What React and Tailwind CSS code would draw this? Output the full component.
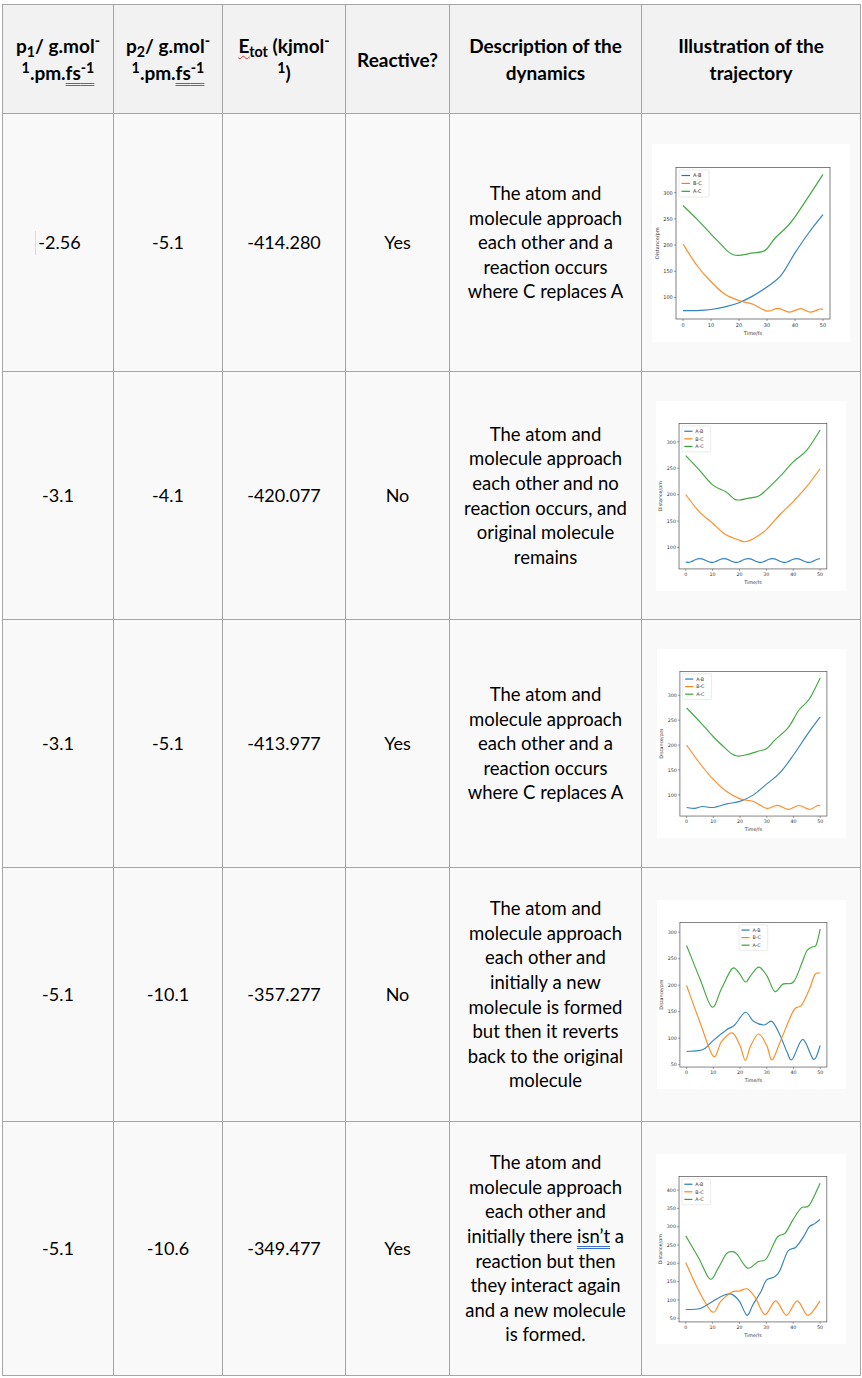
import React from 'react';

const COLORS = ['#1f77b4', '#ff7f0e', '#2ca02c'];
const NAMES = ['A-B', 'B-C', 'A-C'];

// catmull-rom through the sampled points
function smooth(pts) {
  let d = `M${pts[0][0].toFixed(2)},${pts[0][1].toFixed(2)}`;
  for (let i = 0; i < pts.length - 1; i++) {
    const p0 = pts[i - 1] || pts[i];
    const p1 = pts[i];
    const p2 = pts[i + 1];
    const p3 = pts[i + 2] || p2;
    const c1x = p1[0] + (p2[0] - p0[0]) / 6;
    const c1y = p1[1] + (p2[1] - p0[1]) / 6;
    const c2x = p2[0] - (p3[0] - p1[0]) / 6;
    const c2y = p2[1] - (p3[1] - p1[1]) / 6;
    d += ` C${c1x.toFixed(2)},${c1y.toFixed(2)} ${c2x.toFixed(2)},${c2y.toFixed(2)} ${p2[0].toFixed(2)},${p2[1].toFixed(2)}`;
  }
  return d;
}

const wave = [];
for (let t = 0; t <= 50; t += 1) wave.push([t, 75.5 + 3.5 * Math.sin((2 * Math.PI * (t - 3)) / 9)]);

const charts = [
  {
    size: 198,
    data: [
      [[0, 75], [5, 75], [10, 77], [15, 82], [20, 90], [25, 103], [30, 120], [35, 142], [40, 185], [45, 224], [50, 258]],
      [[0, 202], [5, 161], [10, 130], [15, 106], [20, 94], [25, 87], [30, 74], [34, 79], [38, 72], [42, 78.5], [45.5, 72], [49, 78], [50, 77]],
      [[0, 275.5], [5, 249.6], [10, 221], [14, 199], [16, 188], [18, 181.5], [20, 180.5], [22, 182], [25, 185], [28, 187], [30, 193], [33, 214], [37, 234], [40, 254], [45, 294], [50, 335]],
    ],
  },
  {
    size: 190,
    data: [
      wave,
      [[0, 200], [5, 168], [10, 146], [15, 124], [20, 114], [22, 111], [25, 116], [30, 134], [35, 162], [40, 187], [45, 215], [50, 249]],
      [[0, 274], [5, 247], [10, 218.5], [15, 205], [18, 192], [20, 190], [23, 193], [27, 197], [30, 209], [35, 234], [40, 262], [45, 284], [50, 322]],
    ],
  },
  {
    size: 189,
    data: [
      [[0, 74.7], [3, 73], [6, 76.7], [10, 74.7], [15, 82], [20, 87], [25, 100], [30, 122], [35, 144.7], [40, 180], [45, 220], [50, 256.7]],
      [[0, 200], [5, 163], [10, 131], [15, 106.7], [20, 92], [25, 86.7], [30, 73], [34, 79], [38, 71], [42, 78.7], [46, 70.7], [49, 78.7], [50, 78]],
      [[0, 274.7], [5, 246.7], [10, 216.7], [15, 191], [17, 182], [19, 178], [22, 180], [27, 188], [30, 193], [33, 210], [38, 235], [42, 270], [46, 293], [50, 334.7]],
    ],
  },
  {
    size: 189,
    center: true,
    data: [
      [[0, 75], [5, 77], [7, 81], [10, 96], [15, 116], [18, 125], [22, 149], [25, 132], [29, 125], [32, 131.6], [35, 105], [37.5, 75], [39.5, 60], [43.5, 97.7], [47.5, 60], [50, 86.4]],
      [[0, 199.5], [5, 130], [10, 66], [13, 93], [17, 110], [20, 86], [22, 58], [24, 86], [27, 108], [30, 86], [32, 59], [35, 93], [40, 152], [43, 162], [46, 193], [48, 220], [50, 223]],
      [[0, 275], [5, 212], [9.5, 158.7], [13, 193], [17, 231], [19.5, 224], [22, 206], [24, 218], [27, 234], [30, 218], [33, 188], [36, 202], [40, 206], [43, 240], [45, 265], [47, 272], [48.5, 276], [50, 306]],
    ],
  },
  {
    size: 190,
    data: [
      [[0, 74], [5, 76], [10, 96], [14, 112], [17, 116], [20, 96], [22.8, 58], [25, 87], [28, 123], [30, 154], [33, 163], [35, 180], [38, 233], [41, 244], [44, 275], [46, 300], [48, 308.5], [50, 320]],
      [[0, 202], [5, 123], [10, 67], [13, 96], [17, 121], [20, 124.5], [23, 130], [26, 105], [29.5, 60], [33.5, 97.6], [37.5, 58], [41.5, 97.6], [45.5, 58], [50, 97.6]],
      [[0, 275], [5, 212], [9, 157], [12, 185.5], [15, 225], [17, 232], [19, 226], [23, 187], [27, 205], [30, 212.5], [34, 271], [37, 282.5], [40, 320], [43, 351.6], [46, 359], [50, 419]],
    ],
  },
];

function Chart({ size, data, center }) {
  const L = 24, R = 178, T = 23.5, B = 175;
  const vals = data.flatMap((s) => s.map((p) => p[1]));
  let lo = Math.min(...vals);
  let hi = Math.max(...vals);
  const m = (hi - lo) * 0.05;
  lo -= m;
  hi += m;
  const sx = (t) => L + ((t + 2.5) / 55) * (R - L);
  const sy = (v) => B - ((v - lo) / (hi - lo)) * (B - T);
  const yticks = [];
  for (let v = Math.ceil(lo / 50) * 50; v <= hi; v += 50) yticks.push(v);
  const lx = center ? (L + R) / 2 - 15 : L + 3;
  const ly = T + 2.5;

  return (
    <svg width={size} height={size} viewBox="0 0 198 198" className="block bg-white">
      <g fontFamily="DejaVu Sans, sans-serif" fontSize="5" fill="#333">
        {data.map((s, i) => (
          <path key={i} d={smooth(s.map(([t, v]) => [sx(t), sy(v)]))} fill="none" stroke={COLORS[i]} strokeOpacity="0.9" strokeWidth="1.2" strokeLinejoin="round" />
        ))}
        <rect x={L} y={T} width={R - L} height={B - T} fill="none" stroke="#555" strokeWidth="0.75" />
        {[0, 10, 20, 30, 40, 50].map((t) => (
          <g key={t}>
            <line x1={sx(t)} x2={sx(t)} y1={B} y2={B + 2} stroke="#555" strokeWidth="0.6" />
            <text x={sx(t)} y={B + 7.6} textAnchor="middle">{t}</text>
          </g>
        ))}
        {yticks.map((v) => (
          <g key={v}>
            <line x1={L - 2} x2={L} y1={sy(v)} y2={sy(v)} stroke="#555" strokeWidth="0.6" />
            <text x={L - 3.2} y={sy(v) + 1.8} textAnchor="end">{v}</text>
          </g>
        ))}
        <text x={(L + R) / 2} y={B + 15.5} textAnchor="middle">Time/fs</text>
        <text transform={`translate(${L - 17.5},${(T + B) / 2}) rotate(-90)`} textAnchor="middle">Distance/pm</text>
        <rect x={lx} y={ly} width="30" height="27" rx="1.2" fill="#fff" fillOpacity="0.85" stroke="#d4d4d4" strokeWidth="0.5" />
        {NAMES.map((n, i) => (
          <g key={n}>
            <line x1={lx + 2.5} x2={lx + 11} y1={ly + 5.5 + i * 7.9} y2={ly + 5.5 + i * 7.9} stroke={COLORS[i]} strokeWidth="1.2" />
            <text x={lx + 14} y={ly + 7.3 + i * 7.9} fontSize="5">{n}</text>
          </g>
        ))}
      </g>
    </svg>
  );
}

const rows = [
  { p1: '-2.56', p2: '-5.1', e: '-414.280', r: 'Yes', cursor: true,
    d: ['The atom and', 'molecule approach', 'each other and a', 'reaction occurs', 'where C replaces A'] },
  { p1: '-3.1', p2: '-4.1', e: '-420.077', r: 'No',
    d: ['The atom and', 'molecule approach', 'each other and no', 'reaction occurs, and', 'original molecule', 'remains'] },
  { p1: '-3.1', p2: '-5.1', e: '-413.977', r: 'Yes',
    d: ['The atom and', 'molecule approach', 'each other and a', 'reaction occurs', 'where C replaces A'] },
  { p1: '-5.1', p2: '-10.1', e: '-357.277', r: 'No',
    d: ['The atom and', 'molecule approach', 'each other and', 'initially a new', 'molecule is formed', 'but then it reverts', 'back to the original', 'molecule'] },
  { p1: '-5.1', p2: '-10.6', e: '-349.477', r: 'Yes',
    d: ['The atom and', 'molecule approach', 'each other and', null, 'reaction but then', 'they interact again', 'and a new molecule', 'is formed.'] },
];

const cell = 'flex items-center justify-center border-r border-b border-[#a6a6a6] text-center';
const head = `${cell} bg-[#f2f2f2] font-bold text-[19px] leading-[27px]`;
const body = `${cell} bg-[#f9f9f9] text-[18px]`;
const fsLine = 'underline decoration-double decoration-[#3d6fd6] decoration-1 underline-offset-[3px]';

export default function App() {
  return (
    <div className="min-h-screen bg-white pl-[2px] pt-[4px] font-['Lato',sans-serif] text-black">
      <div className="grid w-fit grid-cols-[111px_109px_123px_104px_192px_219px] grid-rows-[109px_258px_248px_248px_254px_254px] border-l border-t border-[#a6a6a6]">
        <div className={head}>
          <div className="whitespace-nowrap">
            p<sub>1</sub>/ g.mol<sup>-</sup>
            <br />
            <sup>1</sup>.pm.<span className={fsLine}>fs<sup>-1</sup></span>
          </div>
        </div>
        <div className={head}>
          <div className="whitespace-nowrap">
            p<sub>2</sub>/ g.mol<sup>-</sup>
            <br />
            <sup>1</sup>.pm.<span className={fsLine}>fs<sup>-1</sup></span>
          </div>
        </div>
        <div className={head}>
          <div className="whitespace-nowrap">
            <span className="underline decoration-wavy decoration-[#d8342a] decoration-1 underline-offset-[2px]">
              E<sub>tot</sub>
            </span>{' '}
            (kjmol<sup>-</sup>
            <br />
            <sup>1</sup>)
          </div>
        </div>
        <div className={head}>Reactive?</div>
        <div className={head}>
          <div className="whitespace-nowrap">
            Description of the
            <br />
            dynamics
          </div>
        </div>
        <div className={head}>
          <div className="whitespace-nowrap">
            Illustration of the
            <br />
            trajectory
          </div>
        </div>

        {rows.map((row, i) => (
          <React.Fragment key={i}>
            <div className={body}>
              {row.cursor && <span className="mr-[2px] inline-block h-[24px] w-px bg-[#dcdcdc]" />}
              {row.p1}
            </div>
            <div className={body}>{row.p2}</div>
            <div className={body}>{row.e}</div>
            <div className={body}>{row.r}</div>
            <div className={body}>
              <div className="whitespace-nowrap text-[18.5px] leading-[24.6px]">
                {row.d.map((line, j) =>
                  line === null ? (
                    <div key={j}>
                      initially there <span className={fsLine}>isn’t</span> a
                    </div>
                  ) : (
                    <div key={j}>{line}</div>
                  )
                )}
              </div>
            </div>
            <div className={body}>
              <Chart {...charts[i]} />
            </div>
          </React.Fragment>
        ))}
      </div>
    </div>
  );
}
